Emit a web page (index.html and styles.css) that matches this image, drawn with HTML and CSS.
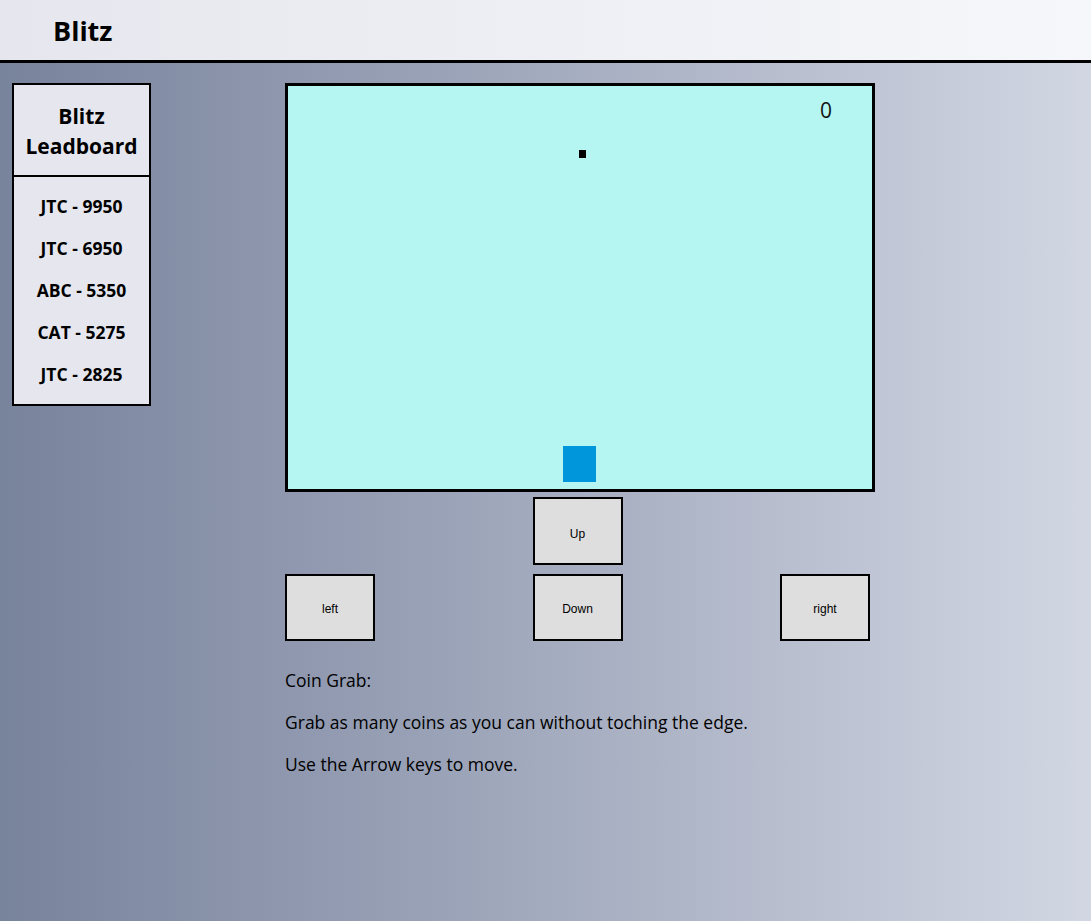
FILE: index.html
```html
<!DOCTYPE html>
<html>
<head>
<meta charset="utf-8">
<link rel="stylesheet" href="styles.css">
</head>
<body>
<header class="topbar"><h1 class="brand">Blitz</h1></header>
<main class="layout">
  <aside class="board">
    <div class="board-title">Blitz<br>Leadboard</div>
    <ul class="board-list">
      <li>JTC - 9950</li>
      <li>JTC - 6950</li>
      <li>ABC - 5350</li>
      <li>CAT - 5275</li>
      <li>JTC - 2825</li>
    </ul>
  </aside>
  <section class="game">
    <div class="canvas">
      <span class="score">0</span>
      <span class="coin"></span>
      <span class="player"></span>
    </div>
    <div class="controls">
      <button class="btn btn-up">Up</button>
      <button class="btn btn-left">left</button>
      <button class="btn btn-down">Down</button>
      <button class="btn btn-right">right</button>
    </div>
    <div class="info">
      <p>Coin Grab:</p>
      <p>Grab as many coins as you can without toching the edge.</p>
      <p>Use the Arrow keys to move.</p>
    </div>
  </section>
</main>
</body>
</html>
```
FILE: styles.css
```css
html, body {
  margin: 0;
  padding: 0;
}
body {
  min-height: 921px;
  font-family: "Open Sans", "Noto Sans", sans-serif;
  color: #000;
  background: linear-gradient(to right, #78839c 0%, #9aa2b7 40%, #d2d7e3 100%);
}
.topbar {
  height: 60px;
  border-bottom: 3px solid #000;
  background: linear-gradient(to right, #e6e7ee, #f6f7fa);
  display: flex;
  align-items: center;
}
.brand {
  margin: 0 0 0 53px;
  font-size: 27px;
  font-weight: 700;
  line-height: 1;
}
.layout {
  display: flex;
  align-items: flex-start;
  padding-top: 20px;
}
.board {
  margin-left: 12px;
  width: 135px;
  border: 2px solid #000;
  background: #e6e7ee;
  text-align: center;
  font-weight: 700;
}
.board-title {
  font-size: 21px;
  line-height: 30px;
  padding: 16px 0 14px;
  border-bottom: 2px solid #000;
}
.board-list {
  list-style: none;
  margin: 0;
  padding: 17px 0 18px;
  font-size: 17.5px;
}
.board-list li {
  line-height: 24px;
}
.board-list li + li {
  margin-top: 18px;
}
.game {
  margin-left: 134px;
  display: flex;
  flex-direction: column;
}
.canvas {
  position: relative;
  width: 584px;
  height: 403px;
  border: 3px solid #000;
  background: #b5f5f2;
}
.score {
  position: absolute;
  left: 532px;
  top: 12px;
  font-size: 21px;
  line-height: 24px;
  color: #111;
}
.coin {
  position: absolute;
  left: 291px;
  top: 64px;
  width: 7px;
  height: 8px;
  background: #000;
}
.player {
  position: absolute;
  left: 275px;
  top: 360px;
  width: 33px;
  height: 36px;
  background: #0096db;
}
.controls {
  margin-top: 5px;
  display: grid;
  grid-template-columns: 90px 90px 90px;
  grid-template-rows: 68px 67px;
  column-gap: 157.5px;
  row-gap: 9px;
}
.btn {
  margin: 0;
  padding: 0;
  border: 2px solid #000;
  background: #dedede;
  font-family: "Liberation Sans", Arial, sans-serif;
  font-size: 12px;
  color: #000;
}
.btn-up { grid-column: 2; grid-row: 1; padding-top: 6px; }
.btn-left { grid-column: 1; grid-row: 2; padding-top: 2px; }
.btn-down { grid-column: 2; grid-row: 2; padding-top: 2px; }
.btn-right { grid-column: 3; grid-row: 2; padding-top: 2px; }
.info {
  margin-top: 28px;
  font-size: 17.5px;
}
.info p {
  margin: 0 0 19px;
  line-height: 23px;
}
```
